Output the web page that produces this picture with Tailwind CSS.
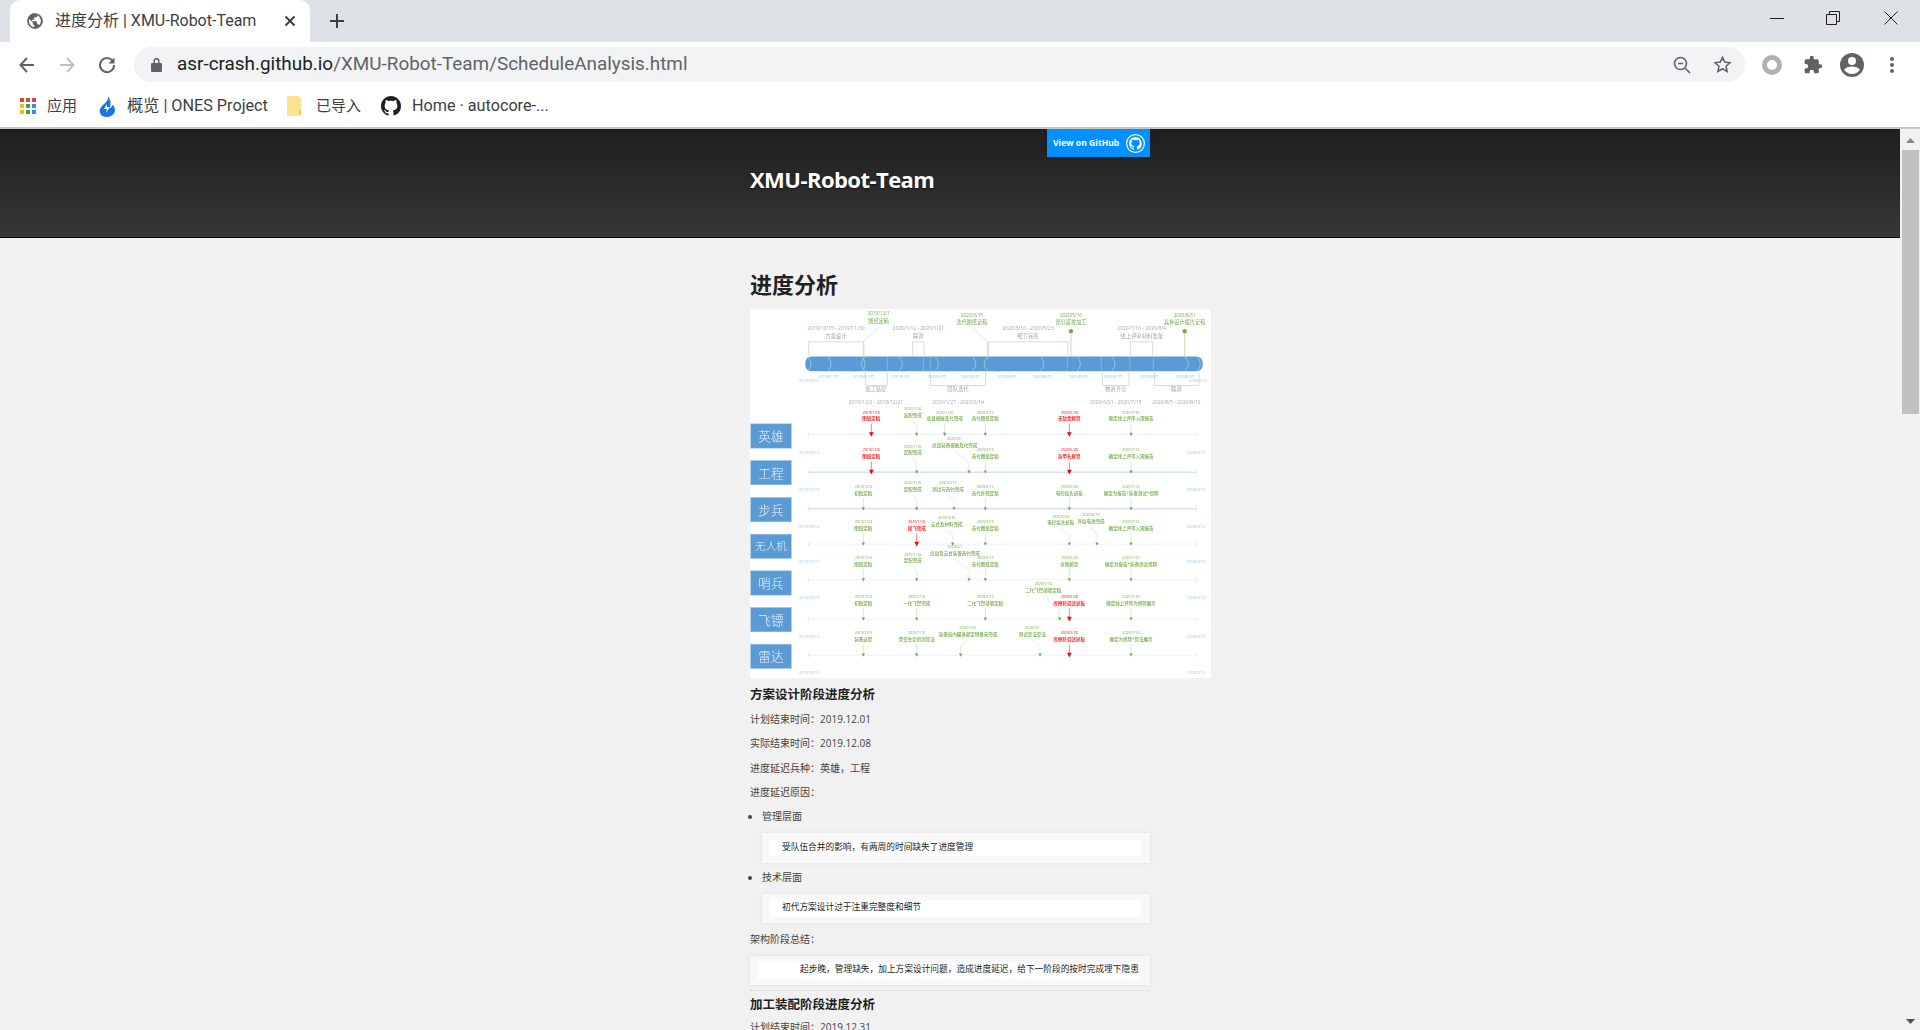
<!DOCTYPE html>
<html lang="zh-CN">
<head>
  <meta charset="UTF-8" />
  <title>进度分析 | XMU-Robot-Team</title>
  <script src="https://cdn.jsdelivr.net/npm/@tailwindcss/browser@4"></script>
</head>
<body class="h-[1030px] w-[1920px] overflow-hidden flex flex-col bg-white font-['Roboto','Noto_Sans_CJK_SC',sans-serif]">
  <!-- Tab strip -->
  <div class="h-[42px] shrink-0 bg-[#dee1e6] flex items-end">
    <div class="ml-[10px] w-[300px] h-[42px] bg-white rounded-t-[10px] flex items-center pl-[16px] text-[#3c4043] text-[16px]">
      <svg class="w-[18px] h-[18px]" viewBox="0 0 24 24"><path fill="#5f6368" d="M12 1.5a10.5 10.5 0 1 0 0 21 10.5 10.5 0 0 0 0-21zM4 12c0-.9.15-1.8.44-2.6L9 14v1.2c0 1.1.9 2 2 2v3.2A8.5 8.5 0 0 1 4 12zm13.6 5.7c-.3-.8-1-1.5-1.9-1.5h-1v-3c0-.6-.4-1-1-1H8v-2h2c.6 0 1-.4 1-1V7h2c1.1 0 2-.9 2-2v-.6a8.5 8.5 0 0 1 2.6 13.3z"/></svg>
      <span class="ml-[11px] w-[229px] whitespace-nowrap">进度分析 | XMU-Robot-Team</span>
      <svg class="w-[12px] h-[12px]" viewBox="0 0 12 12"><path d="M1.5 1.5l9 9m0-9l-9 9" stroke="#3c4043" stroke-width="2" fill="none"/></svg>
    </div>
    <svg class="ml-[19px] mb-[13px] w-[16px] h-[16px]" viewBox="0 0 16 16"><path d="M8 1v14M1 8h14" stroke="#3c4043" stroke-width="2" fill="none"/></svg>
    <div class="ml-auto flex h-[42px] items-center text-[#202124]">
      <svg class="w-[14px] h-[14px] mr-[42px] -mt-[7px]" viewBox="0 0 14 14"><path d="M0 7.5h14" stroke="#202124" fill="none"/></svg>
      <svg class="w-[14px] h-[14px] mr-[44px] -mt-[7px]" viewBox="0 0 14 14"><path d="M.5 3.5h10v10H.5zM3.5 3.5V.5h10v10h-3" stroke="#202124" fill="none"/></svg>
      <svg class="w-[14px] h-[14px] mr-[22px] -mt-[7px]" viewBox="0 0 14 14"><path d="M.5.5l13 13m0-13l-13 13" stroke="#202124" fill="none"/></svg>
    </div>
  </div>

  <!-- Toolbar -->
  <div class="h-[44px] shrink-0 flex items-center pt-[1px]">
    <svg class="ml-[18px] w-[18px] h-[18px]" viewBox="0 0 18 18"><path d="M16 9H3m6-7L2.500 9 9 16" stroke="#5f6368" stroke-width="2" fill="none"/></svg>
    <svg class="ml-[22px] w-[18px] h-[18px]" viewBox="0 0 18 18"><path d="M2 9h13M9 2l6.500 7L9 16" stroke="#bdc1c6" stroke-width="2" fill="none"/></svg>
    <svg class="ml-[22px] w-[18px] h-[18px]" viewBox="0 0 18 18"><path d="M15 5.500A7 7 0 1 0 16 9" stroke="#5f6368" stroke-width="2" fill="none"/><path d="M16.500 1.500v6h-6z" fill="#5f6368"/></svg>
    <div class="ml-[18px] w-[1611px] h-[35px] rounded-full bg-[#f1f3f4] flex items-center pl-[17px] pr-[13px]">
      <svg class="w-[11px] h-[15px]" viewBox="0 0 11 15"><path fill="#5f6368" d="M2.500 6V4a3 3 0 0 1 6 0v2H10a1 1 0 0 1 1 1v7a1 1 0 0 1-1 1H1a1 1 0 0 1-1-1V7a1 1 0 0 1 1-1zm1.500 0h3V4a1.500 1.500 0 0 0-3 0z"/></svg>
      <span class="ml-[15px] text-[18.900px] leading-none whitespace-nowrap text-[#202124]">asr-crash.github.io<span class="text-[#5f6368]">/XMU-Robot-Team/ScheduleAnalysis.html</span></span>
      <svg class="ml-auto w-[18px] h-[18px]" viewBox="0 0 18 18"><circle cx="7.500" cy="7.500" r="6" stroke="#5f6368" stroke-width="1.600" fill="none"/><path d="M12 12l5 5M5 7.500h5" stroke="#5f6368" stroke-width="1.600" fill="none"/></svg>
      <svg class="ml-[22px] w-[19px] h-[19px]" viewBox="0 0 24 24"><path d="M12 3l2.800 6 6.500.8-4.800 4.400 1.300 6.500L12 17.400l-5.800 3.300 1.300-6.500L2.700 9.800 9.200 9z" stroke="#5f6368" stroke-width="2" fill="none"/></svg>
    </div>
    <div class="ml-[17px] w-[20px] h-[20px] rounded-full border-[5px] border-[#b0b0b0] bg-white"></div>
    <svg class="ml-[21px] w-[20px] h-[20px]" viewBox="0 0 24 24"><path fill="#5f6368" d="M20.500 11H19V7c0-1.100-.9-2-2-2h-4V3.500a2.500 2.500 0 0 0-5 0V5H4c-1.100 0-2 .9-2 2v3.800h1.500a2.700 2.700 0 0 1 0 5.400H2V20c0 1.100.9 2 2 2h3.800v-1.500a2.700 2.700 0 0 1 5.400 0V22H17c1.100 0 2-.9 2-2v-4h1.500a2.500 2.500 0 0 0 0-5z"/></svg>
    <svg class="ml-[17px] w-[24px] h-[24px]" viewBox="0 0 24 24"><path fill="#5f6368" d="M12 0a12 12 0 1 0 0 24 12 12 0 0 0 0-24zm0 4a4 4 0 1 1 0 8 4 4 0 0 1 0-8zm0 17c-3.300 0-6.200-1.700-7.900-4.200 1.500-2.300 5-3.300 7.900-3.300s6.400 1 7.900 3.300A9.500 9.500 0 0 1 12 21z"/></svg>
    <svg class="ml-[25px] w-[6px] h-[18px]" viewBox="0 0 6 18"><circle cx="3" cy="3" r="2" fill="#5f6368"/><circle cx="3" cy="9" r="2" fill="#5f6368"/><circle cx="3" cy="15" r="2" fill="#5f6368"/></svg>
  </div>

  <!-- Bookmarks -->
  <div class="h-[41px] shrink-0 flex items-center pb-[1px] text-[16.200px] text-[#3c4043] whitespace-nowrap">
    <div class="ml-[20px] w-[16px] h-[16px] grid grid-cols-3 gap-[2px]">
      <i class="bg-[#ea4335]"></i><i class="bg-[#ea4335]"></i><i class="bg-[#ea4335]"></i>
      <i class="bg-[#fbbc04]"></i><i class="bg-[#34a853]"></i><i class="bg-[#4285f4]"></i>
      <i class="bg-[#fbbc04]"></i><i class="bg-[#34a853]"></i><i class="bg-[#4285f4]"></i>
    </div>
    <span class="ml-[11px] w-[30px] text-[15px]">应用</span>
    <svg class="ml-[21px] w-[18px] h-[21px]" viewBox="0 0 18 21"><path fill="#1a73e8" d="M10 0c1 4-2 6-5 9-3 3-4 5-3 8 1 3 4 4 7 4 4 0 8-3 8-7 0-3-2-5-3-5 0 2-1 3-2 3 1-4 1-8-2-12z"/><path fill="#fff" d="M9 8l-3 5h3l-1 4 4-6H9z"/></svg>
    <span class="ml-[11px] w-[139px]">概览 | ONES Project</span>
    <svg class="ml-[21px] w-[15px] h-[20px]" viewBox="0 0 15 20"><path fill="#fde293" d="M1 0h10l3 2v17a1 1 0 0 1-1 1H1a1 1 0 0 1-1-1V1a1 1 0 0 1 1-1z"/><path fill="#f2c94c" d="M12 14h2v5h-2z"/></svg>
    <span class="ml-[14px] w-[45px] text-[15px]">已导入</span>
    <svg class="ml-[20px] w-[20px] h-[20px]" viewBox="0 0 16 16"><path fill="#1b1f23" d="M8 0C3.580 0 0 3.580 0 8c0 3.540 2.290 6.530 5.470 7.590.4.070.55-.17.55-.38 0-.19-.01-.82-.01-1.490-2.010.37-2.530-.49-2.690-.94-.09-.23-.48-.94-.82-1.130-.28-.15-.68-.52-.01-.53.63-.01 1.080.58 1.230.82.720 1.210 1.870.870 2.330.660.070-.52.280-.87.510-1.070-1.780-.2-3.640-.89-3.640-3.950 0-.87.310-1.590.820-2.150-.08-.2-.36-1.020.08-2.120 0 0 .67-.21 2.200.82.640-.18 1.320-.27 2-.27s1.360.090 2 .27c1.530-1.040 2.200-.82 2.200-.82.440 1.100.160 1.920.080 2.120.510.560.820 1.270.820 2.150 0 3.070-1.870 3.750-3.650 3.950.290.250.540.730.540 1.480 0 1.070-.01 1.930-.01 2.200 0 .210.150.460.550.380A8.010 8.010 0 0 0 16 8c0-4.420-3.580-8-8-8z"/></svg>
    <span class="ml-[11px]">Home · autocore-...</span>
  </div>

  <!-- Page + scrollbar -->
  <div class="flex-1 min-h-0 flex border-t-2 border-[#c8c8c8]">
    <main class="w-[1900px] bg-[#f1f1f1] overflow-hidden font-['Open_Sans','Noto_Sans_CJK_SC',sans-serif] text-[#444] text-[10px]">
      <header class="h-[109px] border-b border-black bg-gradient-to-b from-[#1e1e1e] to-[#373737]">
        <div class="relative w-[400px] mx-auto">
          <a class="absolute top-0 right-0 w-[103px] h-[28px] bg-[#0090ff] flex items-center pl-[6px] text-white text-[8.600px] font-bold shadow-sm">View on GitHub
            <svg class="ml-auto mr-[5px] w-[19px] h-[19px]" viewBox="0 0 16 16"><circle cx="8" cy="8" r="7.500" fill="none" stroke="#fff" stroke-width="1"/><path fill="#fff" d="M8 2.500c-3 0-5.500 2.400-5.500 5.500 0 2.400 1.600 4.500 3.800 5.200.3 0 .4-.1.4-.3v-1c-1.500.3-1.900-.4-2-.7-.1-.2-.3-.6-.6-.8-.2-.1-.5-.4 0-.4.400 0 .8.400.9.600.5.800 1.300.6 1.600.5 0-.4.200-.6.400-.8-1.200-.1-2.500-.6-2.500-2.700 0-.6.200-1.100.6-1.500-.1-.1-.2-.7 0-1.500 0 0 .5-.1 1.500.6a5 5 0 0 1 2.800 0c1-.7 1.500-.6 1.500-.6.200.8.100 1.400 0 1.500.4.400.6.900.6 1.500 0 2.100-1.300 2.600-2.500 2.700.2.200.4.500.4 1v1.500c0 .2.100.3.400.3A5.500 5.500 0 0 0 8 2.500z"/></svg>
          </a>
          <h1 class="pt-[37px] text-[22px] leading-[26px] font-bold tracking-[-0.55px] text-white [text-shadow:0_1px_2px_rgba(0,0,0,.6)]">XMU-Robot-Team</h1>
        </div>
      </header>

      <div class="w-[400px] mx-auto">
        <h2 class="mt-[32px] text-[22px] leading-[28px] font-bold text-[#222]">进度分析</h2>
        <div class="mt-[11px] w-[461px] h-[369px] bg-white">
          <svg id="chart" class="block blur-[0.35px]" width="461" height="369" viewBox="30 -274.500 1383 1107"></svg>
        </div>

        <h3 class="mt-[7px] text-[12.500px] leading-[20px] font-bold text-[#222]">方案设计阶段进度分析</h3>
        <p class="mt-[6.500px] leading-[15px]">计划结束时间：2019.12.01</p>
        <p class="mt-[9.500px] leading-[15px]">实际结束时间：2019.12.08</p>
        <p class="mt-[9.500px] leading-[15px]">进度延迟兵种：英雄，工程</p>
        <p class="mt-[9.500px] leading-[15px]">进度延迟原因：</p>
        <ul class="list-disc pl-[12px]">
          <li class="mt-[8.500px] leading-[15px]">管理层面
            <blockquote class="mt-[9px] h-[30px] bg-[#f8f8f8] shadow-[0_0_4px_rgba(0,0,0,.08)] pl-[8px] pr-[9px] pt-[7px]">
              <div class="h-[16px] bg-white pl-[12px] text-[8.700px] leading-[14px] text-[#222] whitespace-nowrap">受队伍合并的影响，有两周的时间缺失了进度管理</div>
            </blockquote>
          </li>
          <li class="mt-[7.500px] leading-[15px]">技术层面
            <blockquote class="mt-[8.500px] h-[29px] bg-[#f8f8f8] shadow-[0_0_4px_rgba(0,0,0,.08)] pl-[8px] pr-[9px] pt-[6px]">
              <div class="h-[17px] bg-white pl-[12px] text-[8.700px] leading-[15px] text-[#222] whitespace-nowrap">初代方案设计过于注重完整度和细节</div>
            </blockquote>
          </li>
        </ul>
        <p class="mt-[9.500px] leading-[15px]">架构阶段总结：</p>
        <blockquote class="mt-[9px] h-[29px] bg-[#f8f8f8] shadow-[0_0_4px_rgba(0,0,0,.08)] pl-[8px] pr-[9px] pt-[6px]">
          <div class="h-[17px] bg-white pl-[42px] text-[8.700px] leading-[15px] text-[#222] whitespace-nowrap overflow-hidden">起步晚，管理缺失，加上方案设计问题，造成进度延迟，给下一阶段的按时完成埋下隐患</div>
        </blockquote>
        <hr class="mt-[5px] border-0 border-t border-dotted border-[#d0d0d0]" />
        <h3 class="mt-[4px] text-[12.500px] leading-[20px] font-bold text-[#222]">加工装配阶段进度分析</h3>
        <p class="mt-[5px] leading-[15px]">计划结束时间：2019.12.31</p>
      </div>
    </main>

    <!-- Scrollbar -->
    <div class="w-[20px] bg-[#f1f1f1] flex flex-col items-center">
      <svg class="mt-[9px] w-[9px] h-[5px]" viewBox="0 0 9 5"><path d="M4.500 0L9 5H0z" fill="#888"/></svg>
      <div class="mt-[7px] w-[17px] h-[264px] bg-[#c1c1c1]"></div>
      <svg class="mt-auto mb-[6px] w-[9px] h-[5px]" viewBox="0 0 9 5"><path d="M4.500 5L9 0H0z" fill="#505050"/></svg>
    </div>
  </div>

  <script>
    // chart coordinates are in 3x units of the picture, y offset matches the lower section
    var GREEN = '#70ad47', RED = '#ff0000', GREY = '#a6a6a6', BLUE = '#9dc3e6', BAR = '#5b9bd5';
    var out = '';
    function txt(x, y, s, size, color, weight) {
      out += '<text x="' + x + '" y="' + y + '" font-size="' + size + '" fill="' + color + '" text-anchor="middle" dominant-baseline="central"' + (weight ? ' font-weight="' + weight + '"' : '') + '>' + s + '</text>';
    }
    function line(d, color, w) {
      out += '<path d="' + d + '" fill="none" stroke="' + color + '" stroke-width="' + (w || 1.5) + '"/>';
    }

    // top timeline
    var o = -840;
    out += '<rect x="196" y="' + (708 + o) + '" width="1192" height="44" rx="18" fill="' + BAR + '"/>';
    [218, 278, 380, 492, 600, 712, 916, 1026, 1130, 1350, 1386].forEach(function (x) {
      line('M' + (x - 14) + ' ' + (709 + o) + 'Q' + (x + 4) + ' ' + (730 + o) + ' ' + (x - 14) + ' ' + (751 + o), '#cfe2f3', 1.5);
    });
    [442, 550, 572, 982, 1084, 1170, 1240].forEach(function (x) { line('M' + x + ' ' + (709 + o) + 'V' + (751 + o), '#a9c9e8', 1.5); });
    [372, 740].forEach(function (x) {
      line('M' + (x + 4) + ' ' + (709 + o) + 'Q' + (x - 20) + ' ' + (730 + o) + ' ' + (x + 4) + ' ' + (751 + o), '#c5e0b4', 2);
    });
    [[288, 206, 370, '2019/10/15 - 2019/11/30', '方案设计'], [535, 518, 552, '2020/1/12 - 2020/1/21', '联调'], [864, 745, 983, '2020/3/16 - 2020/5/23', '细节完善'], [1205, 1171, 1238, '2020/7/16 - 2020/8/4', '线上评审材料准备']].forEach(function (b) {
      txt(b[0], 622 + o, b[3], 15, GREY);
      txt(b[0], 645 + o, b[4], 16, GREY);
      line('M' + b[1] + ' ' + (706 + o) + 'V' + (664 + o) + 'H' + b[2] + 'V' + (706 + o), '#c8c8c8', 2);
    });
    [[408, 376, 442, '2019/12/2 - 2019/12/21', '加工装配'], [654, 571, 737, '2020/1/27 - 2020/3/14', '团队迭代'], [1127, 1087, 1167, '2020/6/21 - 2020/7/15', '物资齐全'], [1309, 1243, 1377, '2020/8/5 - 2020/9/12', '联调']].forEach(function (b) {
      txt(b[0], 843 + o, b[3], 15, GREY);
      txt(b[0], 806 + o, b[4], 16, GREY);
      line('M' + b[1] + ' ' + (754 + o) + 'V' + (795 + o) + 'H' + b[2] + 'V' + (754 + o), '#c8c8c8', 2);
    });
    [[416, 578, 602, '2019/12/1', '图纸定稿'], [696, 582, 605, '2020/3/15', '迭代图纸定稿'], [993, 582, 605, '2020/5/16', '部分返校加工'], [1334, 582, 605, '2020/8/31', '兵种设计报告定稿']].forEach(function (g) {
      txt(g[0], g[1] + o, g[3], 14, GREEN);
      txt(g[0], g[2] + o, g[4], 15.5, GREEN);
    });
    line('M415 ' + (622 + o) + 'L372 ' + (660 + o) + 'V' + (708 + o), '#c5e0b4', 2);
    line('M697 ' + (625 + o) + 'L742 ' + (662 + o) + 'V' + (708 + o), '#c5e0b4', 2);
    [993, 1334].forEach(function (x) {
      line('M' + x + ' ' + (632 + o) + 'V' + (708 + o), '#a9d18e', 2);
      out += '<circle cx="' + x + '" cy="' + (632 + o) + '" r="6.500" fill="' + GREEN + '"/>';
    });
    [[266, '2019年11月'], [371, '2019年12月'], [480, '2020年1月'], [589, '2020年2月'], [690, '2020年3月'], [800, '2020年4月'], [906, '2020年5月'], [1014, '2020年6月'], [1119, '2020年7月'], [1227, '2020年8月'], [1336, '2020年9月']].forEach(function (m) {
      txt(m[0], 768 + o, m[1], 11.500, BLUE);
    });
    txt(207, 780 + o, '2019/10/15', 11.500, BLUE);
    txt(1375, 780 + o, '2020/9/12', 11.500, BLUE);

    // rows: [label, box top, axis y, axis color, end label y, milestones]
    // milestone: [axis x, text x, text y, date, text, red?, bend path start]
    var rows = [
      ['英雄', 70, 102, '#deebf7', 155, [
        [394, 394, 53, '2019/12/6', '图纸定稿', 1],
        [530, 518, 42, '2020/1/16', '装配完成', 0, 1],
        [614, 614, 53, '2020/1/26', '底盘爆破及代完成'],
        [736, 736, 53, '2020/3/15', '迭代图纸定稿'],
        [988, 988, 53, '2020/5/26', '无敌费解算', 1],
        [1173, 1173, 53, '2020/7/16', '确定线上评审入围报告']]],
      ['工程', 180, 215, '#bdd7ee', 267, [
        [394, 394, 165, '2019/12/6', '图纸定稿', 1],
        [530, 518, 155, '2020/1/16', '定配完成', 0, 1],
        [687, 644, 132, '2020/3/1', '底盘装备爆破及代完成', 0, 1],
        [736, 736, 165, '2020/3/15', '迭代图纸定稿'],
        [988, 988, 165, '2020/5/26', '装甲头解算', 1],
        [1173, 1173, 165, '2020/7/16', '确定线上评审入围报告']]],
      ['步兵', 291, 325, '#bdd7ee', 377, [
        [370, 370, 277, '2019/12/3', '初稿定稿'],
        [530, 518, 265, '2020/1/16', '定配完成', 0, 1],
        [642, 624, 265, '2020/2/17', '测试与迭代完成', 0, 1],
        [736, 736, 277, '2020/3/15', '迭代外观定稿'],
        [988, 988, 277, '2020/5/26', '电控接头遮板'],
        [1173, 1173, 277, '2020/7/16', '确定为报告+装备测试+视频']]],
      ['无人机', 401, 431, '#deebf7', 482, [
        [370, 370, 381, '2019/12/4', '图纸定稿'],
        [530, 530, 381, '2020/1/16', '建飞完成', 1],
        [638, 620, 369, '2020/3/16', '云台及材料完成', 0, 1],
        [736, 736, 381, '2020/3/15', '迭代图纸定稿'],
        [988, 962, 365, '2020/5/26', '电控接头遮板', 0, 1],
        [1071, 1053, 360, '2020/6/19', '外接电池完成', 0, 1],
        [1173, 1173, 381, '2020/7/16', '确定线上评审入围报告']]],
      ['哨兵', 511, 538, '#deebf7', 590, [
        [370, 370, 489, '2019/12/4', '图纸定稿'],
        [530, 518, 479, '2020/1/16', '定配完成', 0, 1],
        [687, 645, 457, '2020/3/1', '底盘及云台装备迭代完成', 0, 1],
        [736, 736, 489, '2020/3/15', '迭代图纸定稿'],
        [988, 988, 489, '2020/5/26', '全局解算'],
        [1173, 1173, 489, '2020/7/16', '确定为报告+装备测试视频']]],
      ['飞镖', 621, 656, '#deebf7', 709, [
        [370, 370, 607, '2019/12/3', '初稿定稿'],
        [530, 530, 607, '2020/1/16', '一代飞镖完成'],
        [736, 736, 607, '2020/3/15', '二代飞镖部署定稿'],
        [959, 910, 568, '2020/5/16', '二代飞镖部署定稿', 0, 1],
        [988, 988, 607, '2020/5/26', '摩擦轮调试遮板', 1],
        [1173, 1173, 607, '2020/7/16', '确定线上评审为视频展示']]],
      ['雷达', 731, 764, '#deebf7', 815, [
        [370, 370, 715, '2019/12/3', '装备选型'],
        [530, 530, 715, '2020/1/16', '荣誉生命的测算法'],
        [662, 684, 700, '2020/1/25', '装备自内瞄准部定物备未完成', 0, 1],
        [900, 877, 699, '2020/5/1', '测试算法算法', 0, 1],
        [988, 988, 715, '2020/5/26', '摩擦轮调试遮板', 1],
        [1173, 1173, 715, '2020/7/16', '确定为视频+算法展示']]]
    ];
    rows.forEach(function (r) {
      var top = r[1], y = r[2];
      out += '<rect x="32" y="' + top + '" width="122" height="73" fill="' + BAR + '" stroke="#9dc3e6" stroke-width="1.500"/>';
      txt(93, top + 36, r[0], r[0].length > 2 ? 32 : 38, '#e8f1fa', 300);
      line('M205 ' + y + 'H1370', r[3], r[3] === '#bdd7ee' ? 3 : 2);
      line('M205 ' + (y - 7) + 'V' + (y + 7), '#bdd7ee', 1.500);
      line('M1369 ' + (y - 7) + 'V' + (y + 7), '#bdd7ee', 1.500);
      txt(207, r[4], '2019/10/15', 11.500, BLUE);
      txt(1369, r[4], '2020/9/12', 11.500, BLUE);
      r[5].forEach(function (m) {
        var x = m[0], color = m[5] ? RED : GREEN, light = m[5] ? RED : '#a9d18e';
        txt(m[1], m[2] - 18, m[3], 11, color);
        txt(m[1], m[2], m[4], 13.500, color, 500);
        if (m[6]) {
          var ky = y - 28;
          line('M' + m[1] + ' ' + (m[2] + 18) + 'L' + x + ' ' + ky + 'V' + y, '#c5e0b4', 1.500);
        } else {
          line('M' + x + ' ' + (y - 32) + 'V' + y, light, 1.500);
        }
        var s = m[5] ? 7 : 5;
        out += '<path d="M' + (x - s) + ' ' + (y - s) + 'H' + (x + s) + 'L' + x + ' ' + (y + s) + 'z" fill="' + color + '"/>';
      });
    });
    document.getElementById('chart').innerHTML = out;
  </script>
</body>
</html>
